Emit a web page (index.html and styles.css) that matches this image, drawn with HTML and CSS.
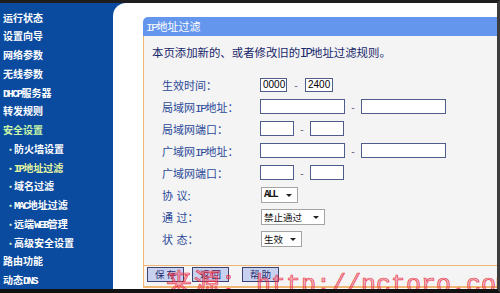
FILE: index.html
```html
<!DOCTYPE html>
<html>
<head>
<meta charset="utf-8">
<link rel="stylesheet" href="styles.css">
</head>
<body>
<div class="frame">
  <nav class="side">
    <div class="item">运行状态</div>
    <div class="item">设置向导</div>
    <div class="item">网络参数</div>
    <div class="item">无线参数</div>
    <div class="item"><span class="lat">DHCP</span>服务器</div>
    <div class="item">转发规则</div>
    <div class="item active-group">安全设置</div>
    <div class="item sub"><span class="dot">•</span>防火墙设置</div>
    <div class="item sub current"><span class="dot">•</span><span class="lat">IP</span>地址过滤</div>
    <div class="item sub"><span class="dot">•</span>域名过滤</div>
    <div class="item sub"><span class="dot">•</span><span class="lat">MAC</span>地址过滤</div>
    <div class="item sub"><span class="dot">•</span>远端<span class="lat">WEB</span>管理</div>
    <div class="item sub"><span class="dot">•</span>高级安全设置</div>
    <div class="item">路由功能</div>
    <div class="item">动态<span class="lat">DNS</span></div>
  </nav>
  <main class="main">
    <section class="panel">
      <div class="panel-head"><span class="lat">IP</span>地址过滤</div>
      <div class="panel-body">
        <p class="desc">本页添加新的、或者修改旧的<span class="lat">IP</span>地址过滤规则。</p>
        <div class="form">
          <div class="label">生效时间：</div>
          <div class="field"><input class="inp time" value="0000"><span class="dash wide">-</span><input class="inp time" value="2400"></div>
          <div class="label">局域网<span class="lat">IP</span>地址：</div>
          <div class="field"><input class="inp ip"><span class="dash">-</span><input class="inp ip"></div>
          <div class="label">局域网端口：</div>
          <div class="field"><input class="inp port"><span class="dash">-</span><input class="inp port"></div>
          <div class="label">广域网<span class="lat">IP</span>地址：</div>
          <div class="field"><input class="inp ip"><span class="dash">-</span><input class="inp ip"></div>
          <div class="label">广域网端口：</div>
          <div class="field"><input class="inp port"><span class="dash">-</span><input class="inp port"></div>
          <div class="label spaced">协 议:</div>
          <div class="field"><div class="sel s-all"><span class="lat bold">ALL</span><i class="arrow"></i></div></div>
          <div class="label spaced">通 过：</div>
          <div class="field"><div class="sel s-pass"><span>禁止通过</span><i class="arrow"></i></div></div>
          <div class="label spaced">状 态：</div>
          <div class="field"><div class="sel s-state"><span>生效</span><i class="arrow"></i></div></div>
        </div>
      </div>
      <div class="btnbar">
        <button class="btn">保 存</button>
        <button class="btn">返 回</button>
        <button class="btn b3">帮 助</button>
      </div>
    </section>
  </main>
  <div class="watermark"><span class="wm-cjk">来源：</span><span class="wm-lat">http://nctoro.com</span></div>
</div>
</body>
</html>
```

FILE: styles.css
```css
* { box-sizing: border-box; }
html, body { margin: 0; padding: 0; }
body { width: 500px; height: 293px; overflow: hidden; font-family: "Noto Sans CJK SC", "Liberation Sans", sans-serif; }

.frame {
  position: relative;
  width: 500px;
  height: 293px;
  display: flex;
  background: #0a4b9f;
  border-top: 3px solid #1e1e1e;
  border-bottom: 4px solid #111;
  border-right: 3px solid #3c3c3c;
  overflow: hidden;
}

.lat { font-family: "Liberation Mono", monospace; font-size: 1.05em; letter-spacing: -1.7px; font-weight: 700; }

.side {
  width: 113px;
  flex: none;
  padding-top: 5.6px;
  color: #fff;
  font-size: 10px;
  font-weight: 700;
}
.item { height: 18.75px; line-height: 18.75px; padding-left: 3px; white-space: nowrap; }
.item.sub { padding-left: 6px; }
.dot { display: inline-block; width: 8px; color: #cfeec8; font-size: 9px; }
.active-group { color: #c8f5a8; }
.current { color: #e4f5a0; }

.main {
  flex: 1;
  background: #fff;
  border-top-left-radius: 13px;
  padding: 14px 0 1px 30px;
  display: flex;
  flex-direction: column;
}

.panel { flex: 1; display: flex; flex-direction: column; }
.panel-head {
  height: 19px;
  line-height: 19px;
  background: #6596ee;
  color: #fff;
  font-size: 11px;
  padding-left: 3px;
  border-top-left-radius: 5px;
}
.panel-body {
  flex: 1;
  background: #f4f4f4;
  border-left: 1px solid #f0b674;
  padding: 9px 0 0 0;
}
.desc {
  margin: 0 0 0 8px;
  font-size: 11.4px;
  line-height: 14px;
  color: #17266a;
  white-space: nowrap;
}
.desc .lat, .label .lat, .panel-head .lat { font-weight: 400; }
.form {
  margin: 12.5px 0 0 18px;
  display: grid;
  grid-template-columns: 98px auto;
  grid-auto-rows: 22px;
  align-items: center;
}
.label { font-size: 11px; color: #2a4898; white-space: nowrap; }
.label.spaced { word-spacing: 1px; }
.field { display: flex; align-items: center; }
.inp {
  height: 15px;
  border: 1px solid #4f5d8c;
  background: #fff;
  padding: 0 0 0 2px;
  font-family: "Liberation Sans", sans-serif;
  font-size: 10px;
  color: #000;
  outline: none;
  margin: 0;
}
.inp.time { width: 27px; height: 14px; }
.inp.time + .dash + .inp.time { width: 28px; }
.inp.ip { width: 85px; }
.inp.port { width: 34px; }
.dash { width: 16px; text-align: center; font-size: 10px; color: #445; line-height: 1; }
.dash.wide { width: 18px; }

.sel {
  height: 16px;
  margin-left: 1px;
  display: flex;
  align-items: center;
  justify-content: space-between;
  background: #fff;
  border: 1px solid #a4a4a4;
  padding: 0 5px 0 2px;
  font-size: 9.5px;
  color: #111;
}
.sel .bold { font-size: 10px; }
.s-all { width: 37px; }
.s-pass { width: 64px; }
.s-state { width: 41px; }
.arrow {
  width: 0; height: 0;
  border-left: 3px solid transparent;
  border-right: 3px solid transparent;
  border-top: 3px solid #222;
  margin-top: 1px;
}

.btnbar {
  height: 23px;
  background: #f4f4f4;
  border-left: 1px solid #f0b674;
  border-top: 1px solid #f0b674;
  border-bottom: 2px solid #f0b674;
  display: flex;
  align-items: flex-start;
  padding: 1px 0 0 3px;
  gap: 8px;
}
.btn {
  width: 37px;
  height: 15px;
  padding: 0;
  margin: 0;
  background: #c9d1f1;
  border: 1px solid #3d4470;
  color: #1a2a6c;
  font-family: "Noto Sans CJK SC", sans-serif;
  font-size: 9.5px;
  line-height: 13px;
}
.btn.b3 { margin-left: 5px; }

.watermark {
  position: absolute;
  left: 166px;
  top: 259px;
  color: rgba(240, 70, 90, 0.4);
  -webkit-text-stroke: 0.7px rgba(235, 40, 60, 0.9);
  white-space: nowrap;
  display: flex;
  align-items: baseline;
  pointer-events: none;
}
.wm-cjk { font-family: "Noto Sans CJK SC", sans-serif; font-size: 26px; letter-spacing: 2px; font-weight: 400; }
.wm-lat { font-family: "Liberation Mono", monospace; font-size: 25px; margin-left: 6px; }
```
